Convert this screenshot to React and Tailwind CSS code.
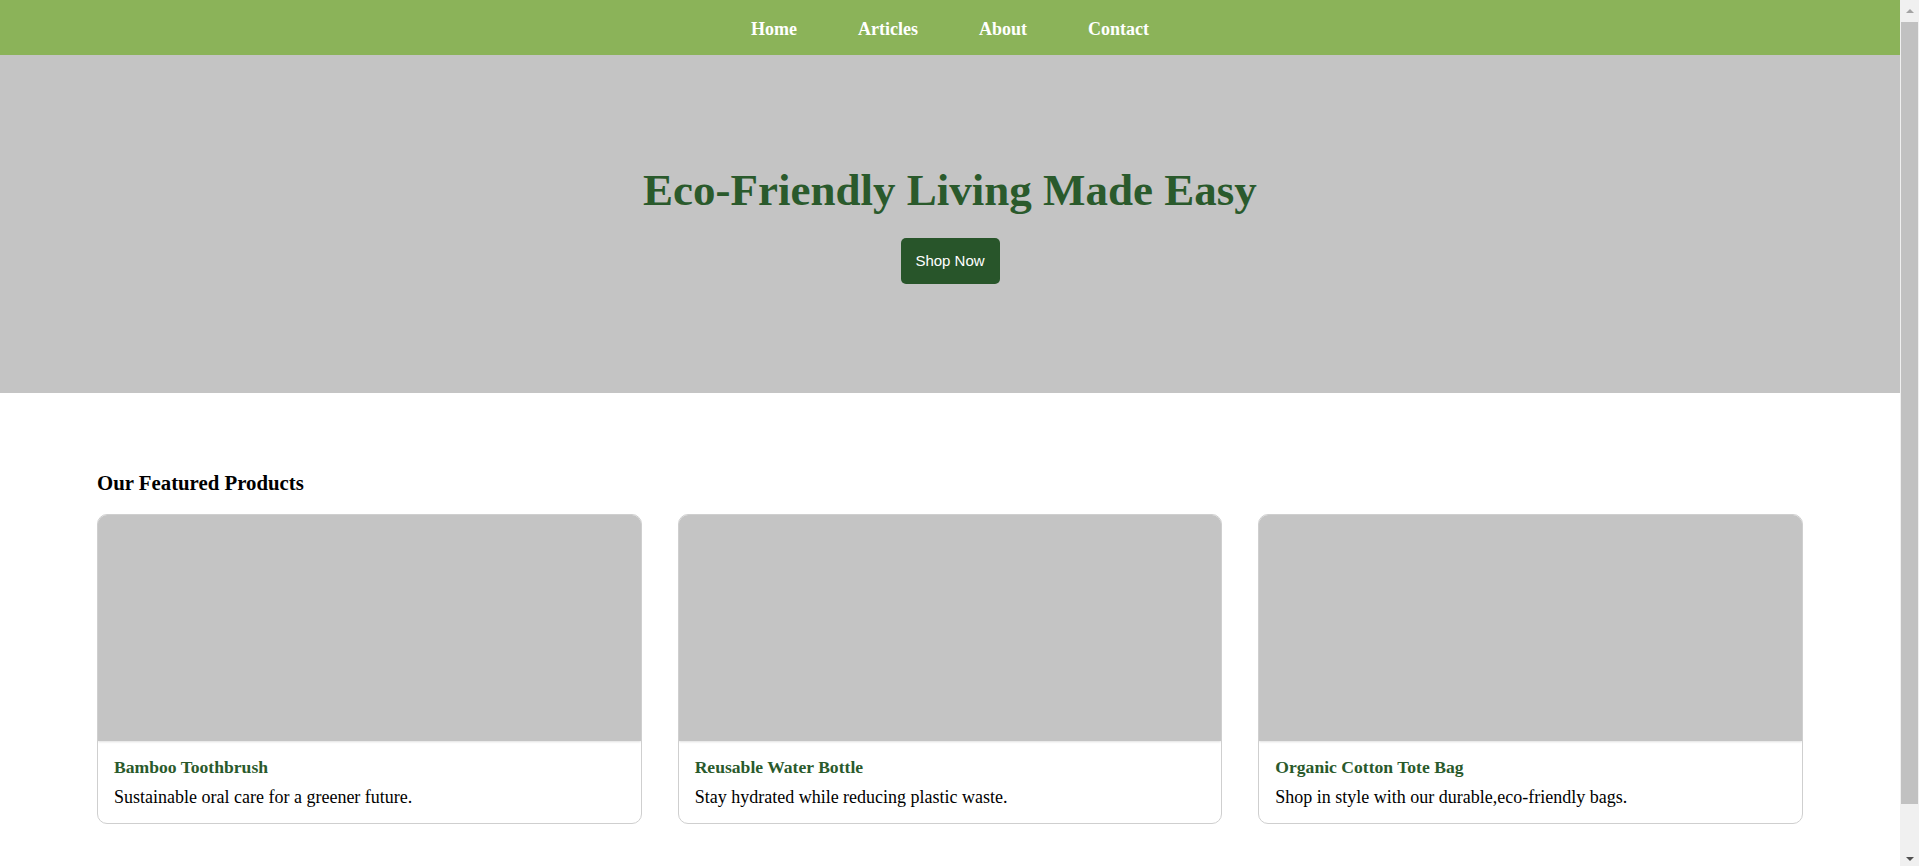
const products = [
    { name: "Bamboo Toothbrush", text: "Sustainable oral care for a greener future." },
    { name: "Reusable Water Bottle", text: "Stay hydrated while reducing plastic waste." },
    { name: "Organic Cotton Tote Bag", text: "Shop in style with our durable,eco-friendly bags." },
];

function Navbar() {
    return (
        <nav className="bg-[#8bb359] h-[55px] pt-[3px] flex justify-center items-center">
            <ul className="flex flex-row gap-[61px] text-white font-bold text-[18px]">
                <li><a href="#">Home</a></li>
                <li><a href="#">Articles</a></li>
                <li><a href="#">About</a></li>
                <li><a href="#">Contact</a></li>
            </ul>
        </nav>
    );
}

function ProductCard({ name, text }) {
    return (
        <div className="border border-[#cfcfcf] rounded-[10px] overflow-hidden bg-white">
            <div className="h-[226px] bg-[#c4c4c4] shadow-[0_1px_2px_rgba(0,0,0,0.12)]"></div>
            <div className="px-4 pt-[15px] pb-[15px]">
                <h3 className="text-[17.6px] font-bold text-[#2a5a2c] leading-[22px]">{name}</h3>
                <p className="text-[18px] leading-[22px] mt-[8px] text-black">{text}</p>
            </div>
        </div>
    );
}

// the browser's classic scrollbar, as it shows in the screenshot
function Scrollbar() {
    return (
        <div className="fixed top-0 right-0 w-[19px] h-screen bg-[#f0f0f0] flex flex-col items-center">
            <div className="h-[22px] flex items-center justify-center">
                <div className="w-0 h-0 border-l-[4px] border-r-[4px] border-b-[4px] border-l-transparent border-r-transparent border-b-[#a3a3a3]"></div>
            </div>
            <div className="w-[17px] h-[782px] bg-[#c1c1c1]"></div>
            <div className="flex-1 flex items-end justify-center pb-[5px]">
                <div className="w-0 h-0 border-l-[4px] border-r-[4px] border-t-[4px] border-l-transparent border-r-transparent border-t-[#505050]"></div>
            </div>
        </div>
    );
}

export default function App() {
    return (
        <div className="font-['Liberation_Serif',_'Times_New_Roman',_serif] bg-white">
            <div className="w-[1900px]">
                <Navbar />
                <header className="bg-[#c4c4c4] h-[338px] flex flex-col justify-center items-center">
                    <h1 className="text-[45px] font-bold text-[#2a5a2c] leading-[52px]">Eco-Friendly Living Made Easy</h1>
                    <button className="mt-[22px] bg-[#28552a] text-white text-[15px] font-['Liberation_Sans',_Arial,_sans-serif] w-[99px] h-[46px] rounded-[5px]">
                        Shop Now
                    </button>
                </header>
                <section className="px-[97px] pt-[78px] pb-[97px]">
                    <h2 className="text-[20.8px] font-bold text-black leading-[24px] mb-[19px]">Our Featured Products</h2>
                    <div className="grid grid-cols-3 gap-[36px]">
                        {products.map((p) => (
                            <ProductCard key={p.name} name={p.name} text={p.text} />
                        ))}
                    </div>
                </section>
            </div>
            <Scrollbar />
        </div>
    );
}
